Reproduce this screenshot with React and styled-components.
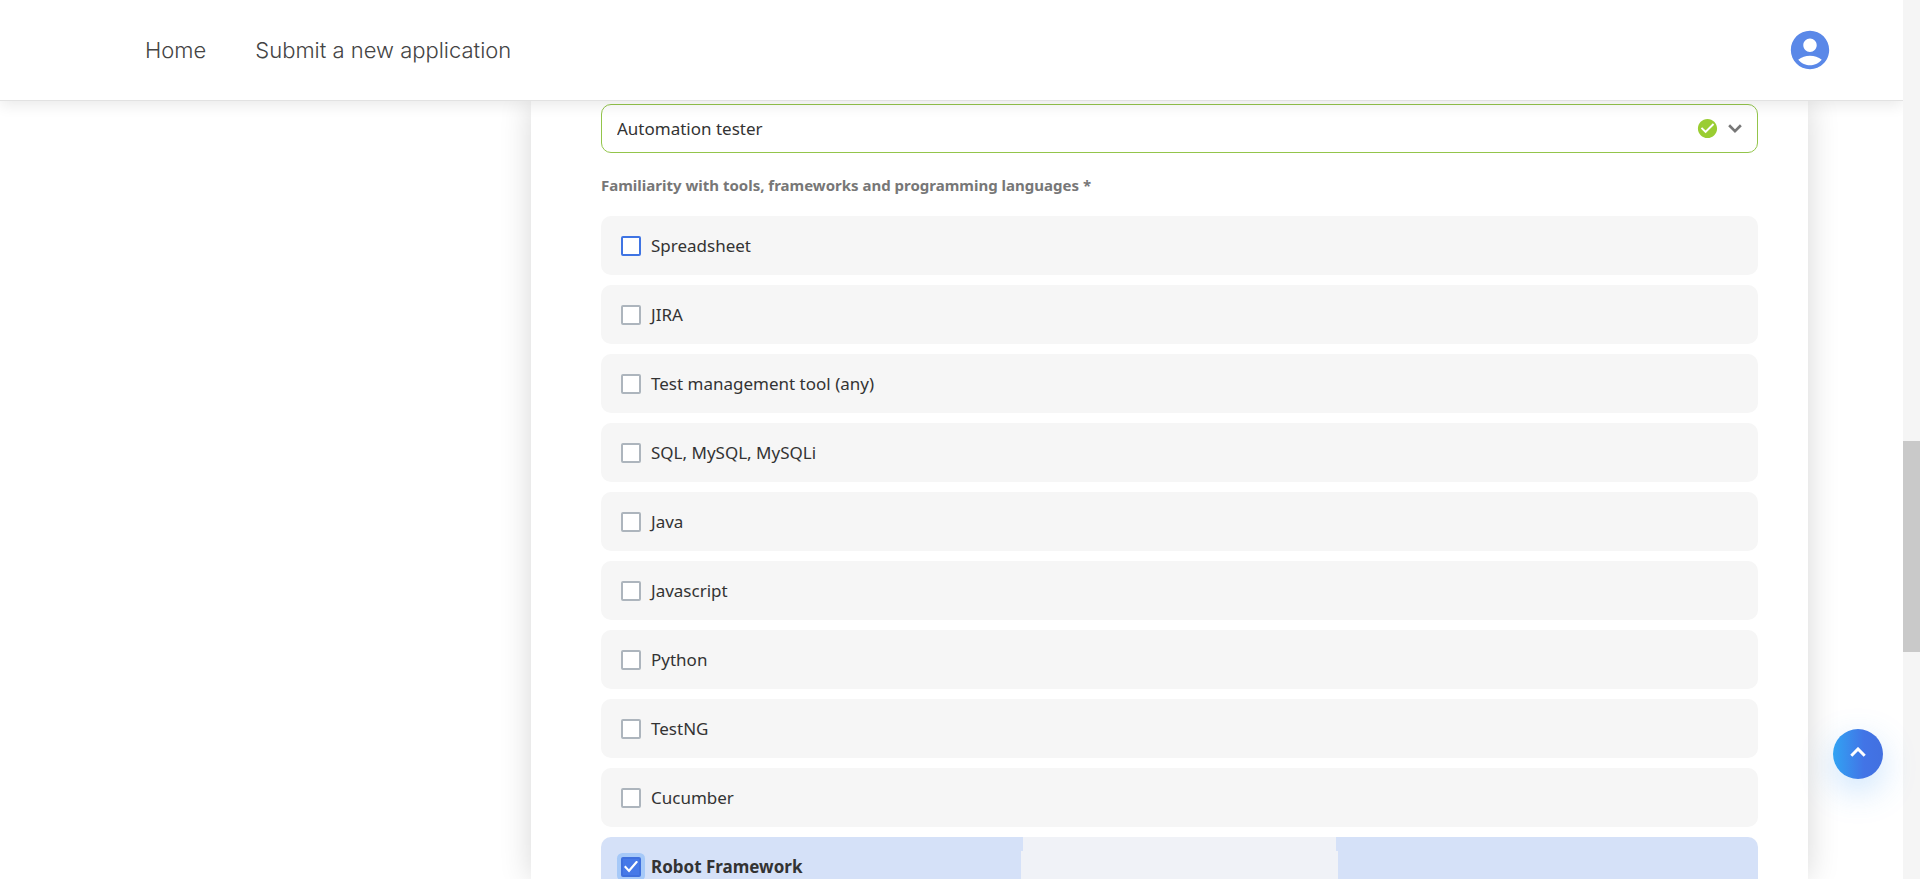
import React, { useState } from "react";
import styled, { createGlobalStyle } from "styled-components";
import { MdAccountCircle, MdCheckCircle } from "react-icons/md";

const GlobalStyle = createGlobalStyle`
  *, *::before, *::after { box-sizing: border-box; }
  body {
    margin: 0;
    background: #fff;
    color: #333;
    font-family: "Noto Sans", sans-serif;
    font-size: 17px;
  }
`;

const Window = styled.div`
  display: flex;
  height: 100vh;
  overflow: hidden;
`;

const Page = styled.div`
  flex: 1;
  min-width: 0;
  display: flex;
  flex-direction: column;
  overflow: hidden;
`;

const Header = styled.header`
  position: relative;
  z-index: 2;
  flex: none;
  display: flex;
  align-items: center;
  justify-content: space-between;
  height: 101px;
  padding: 0 70px 0 145px;
  background: #fff;
  border-bottom: 1px solid #e2e2e2;
  box-shadow: 0 4px 14px rgba(0, 0, 0, 0.09);
`;

const Nav = styled.nav`
  display: flex;
  gap: 49px;
`;

const NavLink = styled.a`
  color: #444;
  font-family: Inter, sans-serif;
  font-size: 22px;
  font-weight: 300;
  line-height: 30px;
  text-decoration: none;
`;

const AccountButton = styled.button`
  display: flex;
  padding: 0;
  border: 0;
  background: none;
  color: #5a88e8;
  font-size: 46px;
`;

const Body = styled.div`
  flex: 1;
  min-height: 0;
  display: flex;
  padding: 0 95px 0 531px;
`;

const Card = styled.main`
  flex: 1;
  min-width: 0;
  padding: 3px 50px 0 70px;
  background: #fff;
  box-shadow: 0 0 30px rgba(0, 0, 0, 0.16);
`;

const SelectField = styled.div`
  display: grid;
  align-items: center;
  > * {
    grid-area: 1 / 1;
  }
`;

const Select = styled.select`
  appearance: none;
  width: 100%;
  height: 49px;
  padding: 0 15px;
  border: 1px solid #93c54b;
  border-radius: 10px;
  background: #fff;
  color: #333;
  font: inherit;
`;

const SelectIcons = styled.span`
  justify-self: end;
  display: flex;
  align-items: center;
  gap: 9px;
  padding-right: 16px;
  color: #777;
  pointer-events: none;
`;

const Chevron = styled.svg`
  display: block;
  fill: none;
  stroke: currentColor;
  stroke-width: 3;
  transform: ${(p) => (p.$up ? "rotate(180deg)" : "none")};
`;

const Group = styled.fieldset`
  margin: 0;
  padding: 0;
  border: 0;
  min-width: 0;
`;

const GroupTitle = styled.legend`
  padding: 22px 0 21px;
  color: #777;
  font-size: 15px;
  font-weight: 700;
  line-height: 20px;
`;

const Options = styled.div`
  display: flex;
  flex-direction: column;
  gap: 10px;
`;

const Option = styled.label`
  display: flex;
  align-items: center;
  gap: 10px;
  height: 59px;
  padding: 0 20px;
  border-radius: 10px;
  line-height: 24px;
  font-weight: ${(p) => (p.$checked ? 700 : 400)};
  background: ${(p) =>
    p.$checked
      ? `linear-gradient(#f0f2f7, #f0f2f7) center top / 313px 14px no-repeat,
         linear-gradient(#f0f2f7, #f0f2f7) center 14px / 317px 45px no-repeat,
         #d5e1f8`
      : "#f6f6f6"};
`;

const Checkbox = styled.input`
  appearance: none;
  flex: none;
  display: grid;
  place-items: center;
  width: 20px;
  height: 20px;
  margin: 0;
  border: 2px solid ${(p) => (p.$active ? "#3f74e3" : "#adb5bd")};
  border-radius: 2px;
  background: #fff;

  &:checked {
    border-color: #3f70de;
    background: #4679e8;
    box-shadow: 0 0 0 4px #a6c9f8;
  }

  &:checked::after {
    content: "";
    width: 14px;
    height: 12px;
    background: #fff;
    clip-path: polygon(0 55%, 11% 42%, 35% 72%, 89% 0, 100% 12%, 36% 100%);
  }
`;

const TopButton = styled.button`
  position: fixed;
  right: 37px;
  bottom: 100px;
  z-index: 3;
  display: flex;
  align-items: center;
  justify-content: center;
  width: 50px;
  height: 50px;
  padding: 0 0 4px;
  border: 0;
  border-radius: 50%;
  background: linear-gradient(90deg, #31a3f3 0%, #4274e6 62%, #4270e0 100%);
  box-shadow: 0 12px 34px rgba(60, 150, 245, 0.27);
  color: #fff;
`;

const ScrollRail = styled.div`
  flex: none;
  width: 17px;
  padding-top: 441px;
  background: #f5f5f5;
`;

const ScrollThumb = styled.div`
  height: 211px;
  background: #c9c9c9;
`;

const tools = [
  "Spreadsheet",
  "JIRA",
  "Test management tool (any)",
  "SQL, MySQL, MySQLi",
  "Java",
  "Javascript",
  "Python",
  "TestNG",
  "Cucumber",
  "Robot Framework",
];

export default function App() {
  const [selected, setSelected] = useState(["Robot Framework"]);

  const toggle = (tool) =>
    setSelected((list) =>
      list.includes(tool) ? list.filter((t) => t !== tool) : [...list, tool]
    );

  return (
    <Window>
      <GlobalStyle />
      <Page>
        <Header>
          <Nav>
            <NavLink href="#home">Home</NavLink>
            <NavLink href="#apply">Submit a new application</NavLink>
          </Nav>
          <AccountButton type="button" aria-label="Account">
            <MdAccountCircle />
          </AccountButton>
        </Header>
        <Body>
          <Card>
            <SelectField>
              <Select aria-label="Position" defaultValue="Automation tester">
                <option>Automation tester</option>
              </Select>
              <SelectIcons>
                <MdCheckCircle size={23} color="#9acd32" />
                <Chevron width="14" height="9" viewBox="0 0 16 10">
                  <path d="M1.3 1.3 8 8l6.7-6.7" />
                </Chevron>
              </SelectIcons>
            </SelectField>
            <Group>
              <GroupTitle>
                Familiarity with tools, frameworks and programming languages *
              </GroupTitle>
              <Options>
                {tools.map((tool, i) => (
                  <Option key={tool} $checked={selected.includes(tool)}>
                    <Checkbox
                      type="checkbox"
                      $active={i === 0}
                      checked={selected.includes(tool)}
                      onChange={() => toggle(tool)}
                    />
                    {tool}
                  </Option>
                ))}
              </Options>
            </Group>
          </Card>
        </Body>
      </Page>
      <ScrollRail aria-hidden="true">
        <ScrollThumb />
      </ScrollRail>
      <TopButton type="button" aria-label="Back to top">
        <Chevron $up width="16" height="10" viewBox="0 0 16 10">
          <path d="M1.3 1.3 8 8l6.7-6.7" />
        </Chevron>
      </TopButton>
    </Window>
  );
}
